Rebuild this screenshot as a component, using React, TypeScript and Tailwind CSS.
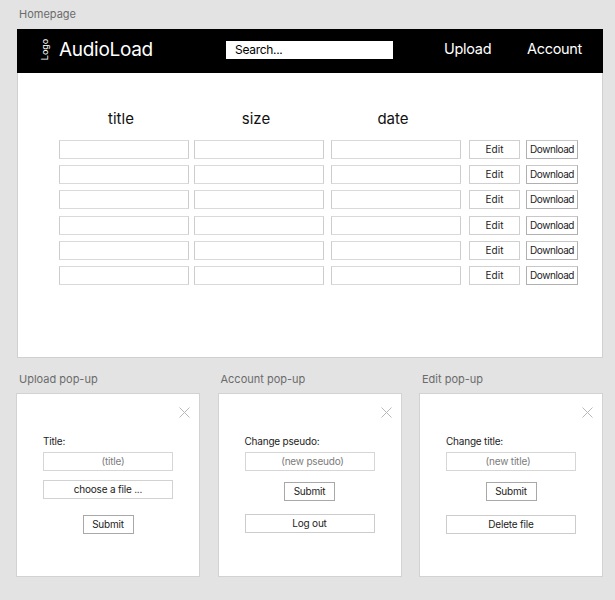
import React from 'react';

const rows = [0, 1, 2, 3, 4, 5];

const CloseIcon = () => (
    <svg width="11" height="11" viewBox="0 0 11 11" className="absolute top-[13px] right-[9px]">
        <line x1="0.5" y1="0.5" x2="10.5" y2="10.5" stroke="#b8b8b8" strokeWidth="1" />
        <line x1="10.5" y1="0.5" x2="0.5" y2="10.5" stroke="#b8b8b8" strokeWidth="1" />
    </svg>
);

const Field = ({ text, className = '' }: { text: string; className?: string }) => (
    <div className={`h-[19px] border border-[#d6d6d6] flex items-center justify-center text-[10px] tracking-[-0.2px] text-[#7c7c7c] ${className}`}>
        {text}
    </div>
);

const Button = ({ text, className = '' }: { text: string; className?: string }) => (
    <div className={`h-[19px] border flex items-center justify-center text-[10px] tracking-[-0.2px] text-[#222] ${className}`}>
        {text}
    </div>
);

const Popup = ({ label, children }: { label: string; children: React.ReactNode }) => (
    <div className="w-[184px]">
        <div className="pl-[3px] h-[14px] text-[11px] leading-[14px] text-[#6b6b6b]">{label}</div>
        <div className="mt-[7px] h-[184px] bg-white border border-[#d2d2d2] relative px-[26px] pt-[41px]">
            <CloseIcon />
            {children}
        </div>
    </div>
);

const App = () => {
    return (
        <div className="w-[615px] h-[600px] bg-[#e3e3e3] overflow-hidden font-['Inter',sans-serif]">
            <div className="pt-[7px] pl-[19px] h-[29px] text-[11px] leading-[14px] text-[#6b6b6b]">Homepage</div>

            {/* homepage card */}
            <div className="ml-[17px] w-[586px] h-[329px] bg-white border border-[#d0d0d0] border-t-0">
                <div className="h-[44px] -mx-px bg-black flex items-center text-white pb-[3px]">
                    <div className="ml-[23px] w-[10px] h-[20px] flex items-center justify-center">
                        <span className="-rotate-90 whitespace-nowrap text-[9px] leading-none">Logo</span>
                    </div>
                    <div className="ml-[9px] w-[167px] text-[19px] leading-none tracking-[-0.3px]">AudioLoad</div>
                    <div className="w-[167px] h-[18px] bg-white text-black text-[12px] leading-[18px] pl-[9px] tracking-[-0.3px]">
                        Search...
                    </div>
                    <div className="ml-[51px] w-[83px] text-[14.5px] leading-none tracking-[-0.3px]">Upload</div>
                    <div className="text-[14.5px] leading-none tracking-[-0.3px]">Account</div>
                </div>

                <div className="pl-[41px] pt-[37px]">
                    <div className="flex h-[18px] text-[15px] leading-[18px] text-[#111]">
                        <div className="w-[130px] text-center pr-[6px]">title</div>
                        <div className="ml-[5px] w-[130px] text-center pr-[6px]">size</div>
                        <div className="ml-[7px] w-[130px] text-center pr-[6px]">date</div>
                    </div>
                    <div className="mt-[12px] flex flex-col gap-[6.2px]">
                        {rows.map((r) => (
                            <div key={r} className="flex h-[19px]">
                                <div className="w-[130px] border border-[#dadada] border-x-[#cdcdcd]" />
                                <div className="ml-[5px] w-[130px] border border-[#dadada] border-x-[#cdcdcd]" />
                                <div className="ml-[7px] w-[130px] border border-[#dadada] border-x-[#cdcdcd]" />
                                <div className="ml-[8px] w-[51px] border border-[#d0d0d0] flex items-center justify-center text-[10px] text-[#222]">
                                    Edit
                                </div>
                                <div className="ml-[6px] w-[52px] border border-[#b0b0b0] border-t-[#c8c8c8] flex items-center justify-center text-[10px] tracking-[-0.4px] text-[#222]">
                                    Download
                                </div>
                            </div>
                        ))}
                    </div>
                </div>
            </div>

            {/* pop-ups */}
            <div className="mt-[14px] pl-[16px] flex gap-[17.5px]">
                <Popup label="Upload pop-up">
                    <div className="text-[10px] leading-[12px] tracking-[-0.2px] text-[#222]">Title:</div>
                    <Field text="(title)" className="mt-[5px] pl-[10px]" />
                    <Button text="choose a file ..." className="mt-[9px] h-[18px] border-[#d2d2d2]" />
                    <Button text="Submit" className="mt-[16px] w-[51px] mx-auto border-[#a8a8a8]" />
                </Popup>
                <Popup label="Account pop-up">
                    <div className="text-[10px] leading-[12px] tracking-[-0.2px] text-[#222]">Change pseudo:</div>
                    <Field text="(new pseudo)" className="mt-[5px] pl-[6px]" />
                    <Button text="Submit" className="mt-[11px] w-[51px] mx-auto border-[#a8a8a8]" />
                    <Button text="Log out" className="mt-[13px] border-[#cccccc]" />
                </Popup>
                <Popup label="Edit pop-up">
                    <div className="text-[10px] leading-[12px] tracking-[-0.2px] text-[#222]">Change title:</div>
                    <Field text="(new title)" className="mt-[5px] pr-[6px]" />
                    <Button text="Submit" className="mt-[11px] w-[51px] mx-auto border-[#a8a8a8]" />
                    <Button text="Delete file" className="mt-[14px] border-[#cccccc]" />
                </Popup>
            </div>
        </div>
    );
};

export default App;
